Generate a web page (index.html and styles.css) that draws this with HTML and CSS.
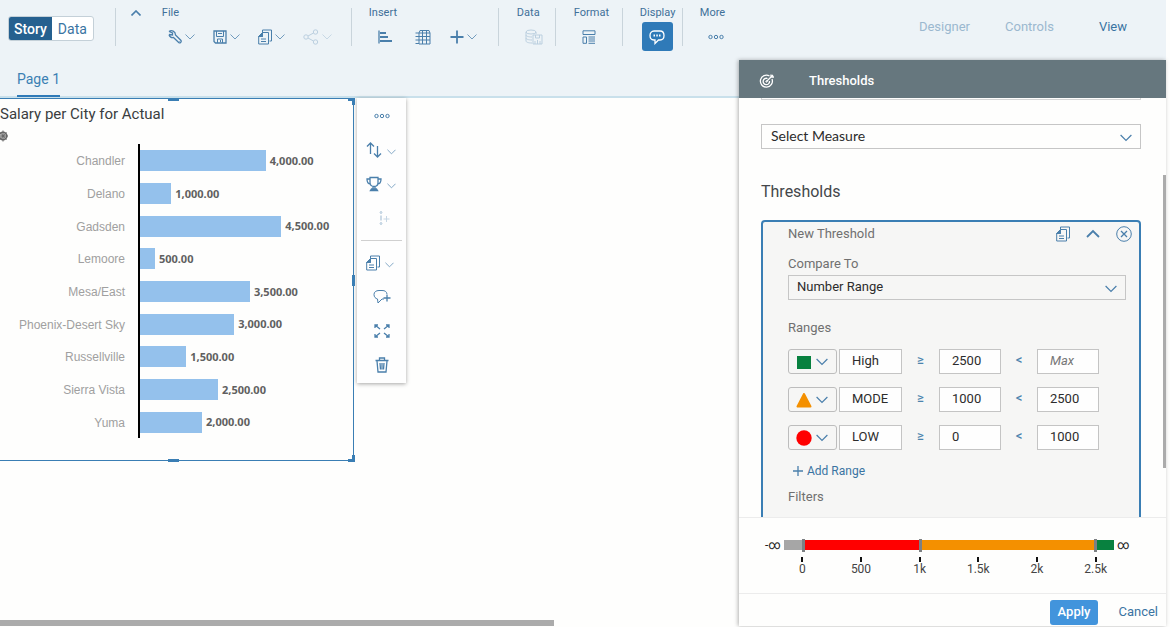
FILE: index.html
```html
<!DOCTYPE html>
<html lang="en">
<head>
<meta charset="utf-8">
<title>Story</title>
<link rel="stylesheet" href="styles.css">
</head>
<body>
<svg class="symbols" aria-hidden="true">
  <symbol id="down" viewBox="0 0 10 6"><path d="M.5.5 5 5 9.500.5"/></symbol>
  <symbol id="copy" viewBox="0 0 14 16"><path d="M4.500 3V1h9v11h-2M4.500 3.500h6V15H.7V7.500zM4.500 3.500v4H.7M3 10h5M3 12.500h5"/><path class="solid" d="M4.500 3.500v4H.7z"/></symbol>
  <symbol id="dots" viewBox="0 0 16 6"><circle cx="2.500" cy="3" r="1.700"/><circle cx="8" cy="3" r="1.700"/><circle cx="13.500" cy="3" r="1.700"/></symbol>
</svg>
<div class="app">
  <header class="toolbar">
    <div class="mode">
      <button class="mode-on">Story</button><button>Data</button>
    </div>
    <div class="group group-file">
      <button class="collapse" aria-label="Collapse"><svg class="i10 bold" viewBox="0 0 10 6"><path d="M.5 5.500 5 1l4.500 4.500"/></svg></button>
      <div class="group-main">
        <span class="caption">File</span>
        <div class="tools pitch">
          <button aria-label="Edit"><svg class="i14" viewBox="0 0 14 14"><path class="mid" d="M1 1.500 4.500 3v2L1 4.500M1 1.500C3.500-.2 7.500 1 7.500 5L13 10.500c.8 1.500-1 3-2.300 2L5.500 7.500C3.500 8 1.500 7 1 4.500"/><path d="M11 11l.5.500"/></svg><svg class="i10"><use href="#down"/></svg></button>
          <button aria-label="Save"><svg class="i14" viewBox="0 0 14 14"><path class="mid" d="M1 1h12v12H2.500L1 11.500z"/><path d="M3.500 1v5.500h7V1M4.500 13V9h5v4M7.500 10v2M5 3.500h4"/></svg><svg class="i10"><use href="#down"/></svg></button>
          <button aria-label="Copy"><svg class="i14 tall"><use href="#copy"/></svg><svg class="i10"><use href="#down"/></svg></button>
          <button aria-label="Share" disabled><svg class="i16" viewBox="0 0 16 16"><circle cx="3" cy="8" r="2.200"/><circle cx="12.500" cy="3" r="2.200"/><circle cx="12.500" cy="13" r="2.200"/><path d="m5 7 5.500-3M5 9l5.500 3"/></svg><svg class="i10"><use href="#down"/></svg></button>
        </div>
      </div>
    </div>
    <div class="group group-insert">
      <span class="caption">Insert</span>
      <div class="tools">
        <button aria-label="Chart"><svg class="i14" viewBox="0 0 14 14"><path class="mid" d="M1 .5v13"/><path class="thick" d="M2 3h6M2 7h8M2 11h12"/></svg></button>
        <button aria-label="Table"><svg class="i16" viewBox="0 0 16 16"><path d="M4 4h11v11H4zM4 7.500h11M4 11h11M7.500 1.500V15M11.500 1.500V15M4 4l1-2.500h9L15 4M.5 4H4M.5 7.500H4M.5 11H4M.5 14.500H4"/></svg></button>
        <button aria-label="Add"><svg class="i14" viewBox="0 0 14 14"><path class="thick" d="M7 .5v13M.5 7h13"/></svg><svg class="i10"><use href="#down"/></svg></button>
      </div>
    </div>
    <div class="group group-data">
      <span class="caption">Data</span>
      <div class="tools"><button aria-label="Data source" disabled><svg class="i18" viewBox="0 0 18 16"><ellipse cx="6" cy="3" rx="5" ry="2"/><path d="M1 3v9c0 1 2 2 6 2M11 3v2M1 6c0 1 2 2 6 2M1 9c0 1 2 2 6 2M8 6h9v9H8zM10.500 6v3h4V6M10 15v-3M12.500 15v-4M15 15v-3"/></svg></button></div>
    </div>
    <div class="group group-format">
      <span class="caption">Format</span>
      <div class="tools"><button aria-label="Layout"><svg class="i14" viewBox="0 0 14 14"><path d="M1 .8h12v3.700H1zM1 7h3.500v6.300H1zM6.500 7H13M6.500 9h6.500M6.500 11H13M6.500 13.300H13"/></svg></button></div>
    </div>
    <div class="group group-display">
      <span class="caption">Display</span>
      <button class="comment-on" aria-label="Comments"><svg class="i16" viewBox="0 0 16 16"><path class="mid" d="M5 11C2 11 1 9 1 6.500S2.500 2 5 2h6c2.500 0 4 2 4 4.500S13.500 11 11 11H9.500L6 14.500V11z"/><path class="thick" d="M4.500 6.500h1.500M7.300 6.500h1.500M10 6.500h1.500"/></svg></button>
    </div>
    <div class="group group-more">
      <span class="caption">More</span>
      <div class="tools"><button aria-label="More"><svg class="i16 flat"><use href="#dots"/></svg></button></div>
    </div>
    <nav class="views">
      <button class="faded">Designer</button>
      <button class="faded">Controls</button>
      <button>View</button>
    </nav>
  </header>

  <div class="work">
    <main class="stage">
      <nav class="tabs"><a href="#page1">Page 1</a></nav>
      <div class="canvas" id="page1">
        <section class="widget">
          <i class="grip top"></i><i class="grip bottom"></i><i class="grip side"></i><i class="corner upper"></i><i class="corner lower"></i>
          <h1>Salary per City for Actual</h1>
          <svg class="gear" viewBox="0 0 12 12"><circle class="thick" cx="3" cy="6" r="3.700"/><circle cx="3" cy="6" r="1.200"/><path d="M3 .5v11M-1 6h9M0 2.500l6.500 7M6.500 2.500l-6.500 7"/></svg>
          <div class="chart">
            <div class="row"><span class="city">Chandler</span><div class="plot"><i class="bar" style="width:59%"></i><b>4,000.00</b></div></div>
            <div class="row"><span class="city">Delano</span><div class="plot"><i class="bar" style="width:14.700%"></i><b>1,000.00</b></div></div>
            <div class="row"><span class="city">Gadsden</span><div class="plot"><i class="bar" style="width:66.300%"></i><b>4,500.00</b></div></div>
            <div class="row"><span class="city">Lemoore</span><div class="plot"><i class="bar" style="width:7%"></i><b>500.00</b></div></div>
            <div class="row"><span class="city">Mesa/East</span><div class="plot"><i class="bar" style="width:51.600%"></i><b>3,500.00</b></div></div>
            <div class="row"><span class="city">Phoenix-Desert Sky</span><div class="plot"><i class="bar" style="width:44.200%"></i><b>3,000.00</b></div></div>
            <div class="row"><span class="city">Russellville</span><div class="plot"><i class="bar" style="width:21.700%"></i><b>1,500.00</b></div></div>
            <div class="row"><span class="city">Sierra Vista</span><div class="plot"><i class="bar" style="width:36.600%"></i><b>2,500.00</b></div></div>
            <div class="row"><span class="city">Yuma</span><div class="plot"><i class="bar" style="width:29.100%"></i><b>2,000.00</b></div></div>
          </div>
        </section>
        <aside class="actions">
          <button class="solo" aria-label="More actions"><svg class="i16 flat"><use href="#dots"/></svg></button>
          <button aria-label="Sort"><svg class="i16" viewBox="0 0 16 16"><path class="mid" d="M4.500 12V1M1 4.500 4.500 1 8 4.500"/><path class="mid" d="M11.500 4v11M8 11.500l3.500 3.500 3.500-3.500"/></svg><svg class="i10"><use href="#down"/></svg></button>
          <button aria-label="Rank"><svg class="i16" viewBox="0 0 16 16"><path class="mid" d="M4 1.500h8v5c0 3-2 4-4 4s-4-1-4-4zM4 3H1c0 3 1 5 3.500 5M12 3h3c0 3-1 5-3.500 5M7 10.500v2.500M9 10.500v2.500M4.500 14.500h7L10.500 13h-5z"/></svg><svg class="i10"><use href="#down"/></svg></button>
          <button class="solo" aria-label="Add reference line" disabled><svg class="i16" viewBox="0 0 16 16"><path class="thick" d="M7 1v3M7 5.500v5M7 12v3"/><path d="M5.500 3l1.500-1.500L8.500 3M5.500 13l1.500 1.500L8.500 13M9.500 9h6M12.500 6v6"/></svg></button>
          <hr>
          <button aria-label="Copy"><svg class="i14 tall"><use href="#copy"/></svg><svg class="i10"><use href="#down"/></svg></button>
          <button class="solo" aria-label="Add comment"><svg class="i18" viewBox="0 0 18 16"><path d="M14 5C13.500 2.500 12 1.500 9 1.500H6c-3 0-5 1.500-5 4s1.500 4 3.500 4.500L5 14l4-4h2"/><path class="mid" d="M10.500 9h7M14 5.500v7"/></svg></button>
          <button class="solo" aria-label="Full screen"><svg class="i16" viewBox="0 0 16 16"><path class="mid" d="M1 5V2h3M1 2l5 4M15 5V2h-3M15 2l-5 4M1 11v3h3M1 14l5-4M15 11v3h-3M15 14l-5-4"/></svg></button>
          <button class="solo" aria-label="Delete"><svg class="i16" viewBox="0 0 16 16"><path class="mid" d="M1.500 3.500h13M5.500 3V1h5v2M3 4l1 11h8l1-11M6 6l.5 6.500M8 6v6.500M10 6l-.5 6.500"/></svg></button>
        </aside>
      </div>
      <div class="hscroll"></div>
    </main>

    <aside class="panel">
      <header class="panel-head">
        <svg class="i16" viewBox="0 0 16 16"><path class="mid" d="M10.500 3A6 6 0 1 0 13 6"/><path class="mid" d="M8.500 5.500A3.200 3.200 0 1 0 10.500 8"/><path class="mid" d="M7.500 8.500 14 2M12 1.500V4h3"/><circle cx="7.500" cy="8.500" r=".7"/></svg>
        <h2>Thresholds</h2>
      </header>
      <div class="panel-body">
        <div class="settings">
          <div class="cut"></div>
          <div class="pick lato"><select aria-label="Measure"><option>Select Measure</option></select><svg class="i12"><use href="#down"/></svg></div>
          <h3>Thresholds</h3>
          <section class="card">
            <header class="card-head">
              <span>New Threshold</span>
              <button aria-label="Duplicate"><svg class="i14 tall"><use href="#copy"/></svg></button>
              <button aria-label="Collapse threshold"><svg class="i14" viewBox="0 0 14 14"><path class="thick" d="m1 10 6-6 6 6"/></svg></button>
              <button aria-label="Remove"><svg class="i16" viewBox="0 0 16 16"><circle cx="8" cy="8" r="7.300"/><path class="mid" d="m5 5 6 6M11 5l-6 6"/></svg></button>
            </header>
            <label class="label" for="compare">Compare To</label>
            <div class="pick"><select id="compare"><option>Number Range</option></select><svg class="i12"><use href="#down"/></svg></div>
            <span class="label ranges">Ranges</span>
            <div class="range">
              <button class="shape" aria-label="Shape of High"><svg class="i16" viewBox="0 0 16 16"><path class="green" d="M1 2h14v13H1z"/></svg><svg class="i12"><use href="#down"/></svg></button>
              <input value="High" aria-label="Name"><span class="op">≥</span><input value="2500" aria-label="Minimum"><span class="op">&lt;</span><input placeholder="Max" aria-label="Maximum">
            </div>
            <div class="range">
              <button class="shape" aria-label="Shape of MODE"><svg class="i16" viewBox="0 0 16 16"><path class="orange" d="M8 2 1.500 14.500h13z"/></svg><svg class="i12"><use href="#down"/></svg></button>
              <input value="MODE" aria-label="Name"><span class="op">≥</span><input value="1000" aria-label="Minimum"><span class="op">&lt;</span><input value="2500" aria-label="Maximum">
            </div>
            <div class="range">
              <button class="shape" aria-label="Shape of LOW"><svg class="i16" viewBox="0 0 16 16"><circle class="red" cx="8" cy="8" r="7.700"/></svg><svg class="i12"><use href="#down"/></svg></button>
              <input value="LOW" aria-label="Name"><span class="op">≥</span><input value="0" aria-label="Minimum"><span class="op">&lt;</span><input value="1000" aria-label="Maximum">
            </div>
            <button class="add"><svg class="i10" viewBox="0 0 10 10"><path class="mid" d="M5 0v10M0 5h10"/></svg>Add Range</button>
            <span class="label">Filters</span>
          </section>
        </div>
        <div class="vscroll"></div>
      </div>
      <div class="scale">
        <div class="line">
          <span class="inf">-∞</span>
          <div class="track"><i class="below"></i><i class="handle"></i><i class="low"></i><i class="handle"></i><i class="mode-seg"></i><i class="handle"></i><i class="high"></i></div>
          <span class="inf end">∞</span>
        </div>
        <div class="ticks"><span>0</span><span>500</span><span>1k</span><span>1.5k</span><span>2k</span><span>2.5k</span></div>
      </div>
      <footer class="panel-foot"><button class="apply">Apply</button><button class="cancel">Cancel</button></footer>
    </aside>
  </div>
</div>
</body>
</html>
```
FILE: styles.css
```css
* { box-sizing: border-box; }
body { margin: 0; background: #fefefd; color: #3a3d40; font: 13px/16px Roboto, "Open Sans", sans-serif; }
button { padding: 0; border: 0; background: none; color: #3a74a2; font: inherit; display: flex; align-items: center; cursor: pointer; }
button:disabled { opacity: .3; }
h1, h2, h3 { margin: 0; font-weight: 400; }
.symbols { position: absolute; width: 0; height: 0; }
svg { flex: none; display: block; fill: none; stroke: #4a7fab; stroke-width: 1; }
.solid { fill: #4a7fab; }
.mid { stroke-width: 1.3; }
.thick { stroke-width: 1.8; }
.bold { stroke-width: 1.6; }
.i10 { width: 10px; height: 6px; }
.i12 { width: 12px; height: 8px; }
.i14 { width: 14px; height: 14px; }
.i14.tall { height: 16px; }
.i16 { width: 16px; height: 16px; }
.i16.flat { height: 6px; }
.i18 { width: 18px; height: 16px; }

.app { display: flex; flex-direction: column; height: 100vh; min-height: 600px; padding: 0 4px 1px 0; }
.toolbar { flex: none; height: 60px; display: flex; align-items: flex-start; background: #edf3f7; padding-top: 8px; }
.mode { display: flex; margin: 8px 21px 0 8px; border: 1px solid #c4d0d8; border-radius: 3px; overflow: hidden; background: #fff; font-size: 14px; }
.mode button { height: 23px; padding: 0 6px; }
.mode .mode-on { background: #25608f; color: #fff; font-weight: 500; padding: 0 5px; }
.group { height: 38px; border-left: 1px solid #c9d4db; padding-left: 17px; font-size: 11px; line-height: 12px; }
.group-file { width: 236px; display: flex; gap: 20px; padding-left: 14px; }
.group-insert { width: 147px; }
.group-data { width: 57px; padding-left: 18px; }
.group-format { width: 67px; padding-left: 18px; }
.group-display { width: 60px; }
.collapse { height: 10px; padding: 0 1px; }
.caption { display: block; height: 12px; color: #3f7099; margin-top: -1px; }
.tools { display: flex; align-items: center; height: 18px; margin-top: 9px; padding-left: 8px; }
.tools button { gap: 3px; }
.tools svg + svg { opacity: .75; }
.pitch { display: grid; grid-template-columns: repeat(4, 45px); padding-left: 6px; }
.group-insert .tools { padding-left: 9px; gap: 19px; }
.group-insert button:first-child { margin-right: 4px; }
.comment-on { width: 31px; height: 29px; margin: 3px 0 0 2px; justify-content: center; background: #2f7ab8; border-radius: 3px; }
.comment-on svg { stroke: #fff; }
.views { margin: 11px 39px 0 auto; display: flex; gap: 35px; }
.views button:last-child { margin-left: 10px; }
.views .faded { color: #9bb8cf; }

.work { flex: 1; min-height: 0; display: flex; }
.stage { flex: 1; min-width: 0; display: flex; flex-direction: column; }
.tabs { height: 38px; flex: none; background: #edf3f7; border-bottom: 2px solid #c9e0eb; padding-left: 17px; display: flex; }
.tabs a { height: 37px; padding-top: 11px; border-bottom: 2px solid #2f7ab8; color: #3b80b3; font-size: 14px; text-decoration: none; }
.canvas { flex: 1; min-height: 0; display: flex; align-items: flex-start; gap: 3px; }
.widget { position: relative; width: 354px; border: solid #3a7eb4; border-width: 1px 1px 1px 0; padding: 6px 0 22px; }
.widget h1 { font-size: 15px; line-height: 18px; }
.grip { position: absolute; background: #3a7eb4; width: 11px; height: 3px; left: 168px; }
.top { top: -1px; }
.bottom { bottom: -2px; }
.side { width: 3px; height: 11px; left: auto; right: -2px; top: 176px; }
.corner { position: absolute; right: -2px; width: 7px; height: 7px; border: 0 solid #3a7eb4; border-right-width: 3px; }
.upper { top: -1px; border-top-width: 3px; }
.lower { bottom: -2px; border-bottom-width: 3px; }
.gear { width: 12px; height: 12px; margin-top: 7px; stroke: #666; }
.chart { margin-top: 2px; }
.row { display: flex; height: 33px; }
.row:nth-child(3n) { height: 32px; }
.city { flex: none; width: 138px; padding-right: 13px; text-align: right; color: #a0a0a0; font: 12px/35px "Liberation Sans", Arial, sans-serif; }
.plot { flex: 1; display: flex; align-items: center; gap: 4px; border-left: 2px solid #000; }
.bar { flex: none; height: 21px; background: #94c1ec; }
.plot b { color: #606060; font: 700 11px/16px "Noto Sans", sans-serif; }
.actions { width: 49px; background: #fefefe; box-shadow: 0 1px 4px rgba(0, 0, 0, .35); padding: 1px 0; }
.actions button { width: 100%; height: 34px; gap: 5px; padding-left: 9px; }
.actions svg + svg { opacity: .75; margin-top: 3px; width: 9px; }
.actions .solo { padding: 0; justify-content: center; }
.actions hr { border: 0; border-top: 1px solid #d0d0d0; margin: 5px 4px; }
.hscroll { flex: none; width: 75%; height: 6px; background: #ababab; }

.panel { flex: none; width: 427px; display: flex; flex-direction: column; background: #fefefd; box-shadow: -1px 0 4px rgba(0, 0, 0, .3); }
.panel-head { flex: none; height: 38px; background: #66777e; color: #fff; display: flex; align-items: center; padding: 3px 20px 0; gap: 34px; }
.panel-head svg { stroke: #fff; }
.panel-head h2 { font-size: 13px; line-height: 16px; font-weight: 500; }
.panel-body { flex: 1; min-height: 0; display: flex; overflow: hidden; }
.settings { flex: 1; padding: 0 22px 0 22px; }
.cut { height: 2px; border: 1px solid #d5d5d5; border-top: 0; }
.pick { display: grid; align-items: center; }
.pick > * { grid-area: 1 / 1; }
.pick select { appearance: none; width: 100%; height: 25px; border: 1px solid #c6c6c6; border-radius: 0; background: transparent; padding: 0 8px 1px; font: inherit; color: #2c2c2c; }
.pick svg { justify-self: end; margin-right: 9px; margin-top: 2px; pointer-events: none; }
.pick.lato { margin-top: 24px; font-family: Lato, sans-serif; font-size: 14px; }
.pick.lato select { padding: 0 9px 2px; }
.settings h3 { font-size: 16px; line-height: 20px; margin: 33px 0 18px; color: #44474a; }
.card { height: 400px; border: 2px solid #3a7eb4; border-radius: 4px; background: #f6f6f5; padding: 2px 13px 0 25px; }
.card-head { display: flex; align-items: center; gap: 16px; height: 20px; margin-right: -6px; color: #707070; }
.card-head span { margin-right: auto; }
.label { display: block; color: #707070; height: 16px; margin: 12px 0 3px; }
.ranges.label { margin: 20px 0 13px; }
.range { display: grid; grid-template-columns: 49px 65px 37px 62px 36px 62px; height: 25px; margin-bottom: 13px; }
.shape { border: 1px solid #bdbdbd; border-radius: 3px; padding: 0 7px; gap: 4px; }
.shape path, .shape circle { stroke: none; }
.green { fill: #08813f; }
.shape .orange { fill: #f49000; stroke: #f49000; stroke-width: 2; stroke-linejoin: round; }
.red { fill: #f00; }
.range input { min-width: 0; border: 1px solid #c4c4c4; background: #fefefe; padding: 0 12px 1px; font: inherit; color: #2c2c2c; }
.shape + input { margin-left: 2px; }
.range input::placeholder { color: #777; font-style: italic; }
.op { text-align: center; color: #4c83ad; line-height: 22px; font-weight: 500; }
.add { gap: 4px; margin: 0 0 0 5px; font-size: 12px; }
.add svg { height: 10px; }
.add + .label { margin-top: 10px; }
.vscroll { width: 3px; height: 70%; margin-top: 77px; background: #ababab; }
.scale { flex: none; height: 76px; border-top: 1px solid #ececec; padding-top: 19px; }
.line { display: flex; align-items: center; height: 16px; padding: 0 37px 0 26px; }
.inf { width: 19px; font-size: 12px; color: #222; }
.inf.end { width: 15px; padding-left: 3px; }
.track { flex: 1; display: flex; align-items: center; }
.track i { height: 10px; }
.below { flex: 18; background: #a6a6a6; }
.low { flex: 115; background: #f00; }
.mode-seg { flex: 173; background: #f49000; }
.high { flex: 17; background: #08813f; }
.track .handle { width: 3px; height: 13px; background: #7d8083; }
.ticks { display: grid; grid-template-columns: repeat(6, 1fr); margin: 4px 41px 0 34px; font-size: 12px; line-height: 14px; text-align: center; color: #444; }
.ticks span::before { content: ""; display: block; width: 2px; height: 5px; margin: 0 auto; background: #111; }
.panel-foot { flex: none; height: 33px; border-top: 1px solid #ececec; display: flex; align-items: center; justify-content: flex-end; gap: 20px; padding: 4px 8px 0; font-size: 13px; }
.apply { height: 25px; padding: 0 8px; border-radius: 3px; background: #4294dc; color: #fff; font-weight: 500; }
```
